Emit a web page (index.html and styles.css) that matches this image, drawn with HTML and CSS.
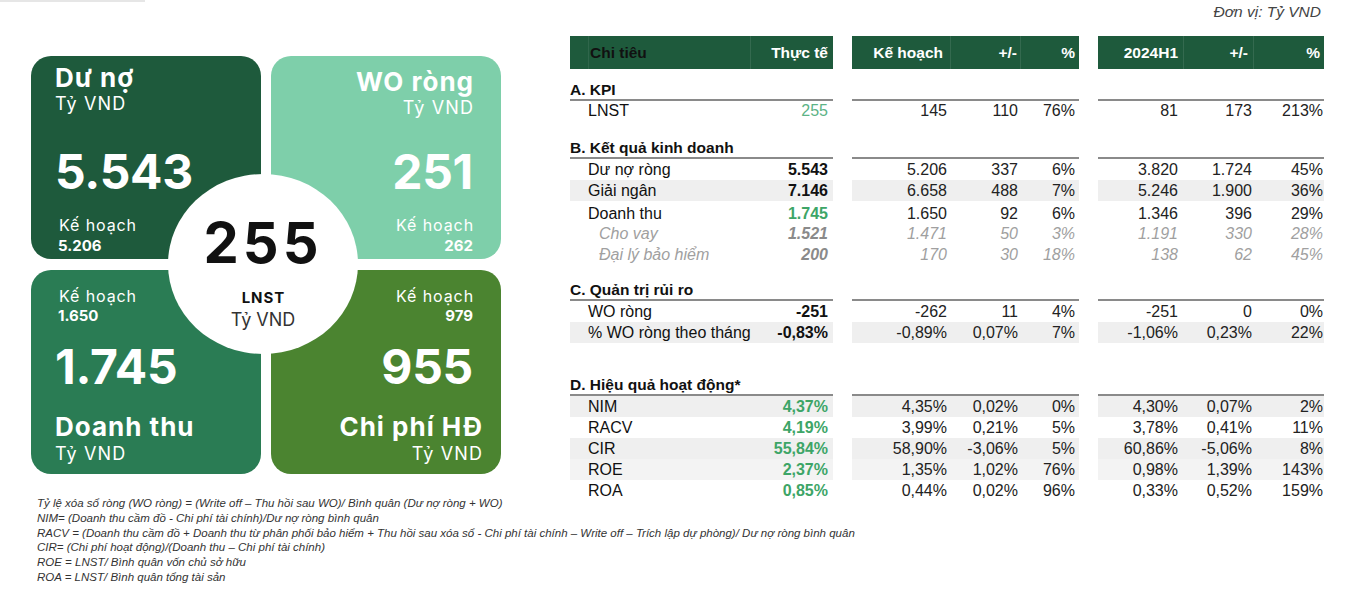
FILE: index.html
```html
<!DOCTYPE html>
<html lang="vi">
<head>
<meta charset="utf-8">
<title>Kết quả kinh doanh</title>
<link rel="stylesheet" href="styles.css">
</head>
<body>
<div class="page">
  <div class="topline"></div>
  <div class="top">
    <section class="kpis">
      <div class="card c-debt">
        <div class="title">Dư nợ</div>
        <div class="sub">Tỷ VND</div>
        <div class="big">5.543</div>
        <div class="plan-label">Kế hoạch</div>
        <div class="plan-val">5.206</div>
      </div>
      <div class="card c-wo right">
        <div class="title">WO ròng</div>
        <div class="sub">Tỷ VND</div>
        <div class="big">251</div>
        <div class="plan-label">Kế hoạch</div>
        <div class="plan-val">262</div>
      </div>
      <div class="card c-rev bottom">
        <div class="plan-label">Kế hoạch</div>
        <div class="plan-val">1.650</div>
        <div class="big">1.745</div>
        <div class="title">Doanh thu</div>
        <div class="sub">Tỷ VND</div>
      </div>
      <div class="card c-cost right bottom">
        <div class="plan-label">Kế hoạch</div>
        <div class="plan-val">979</div>
        <div class="big">955</div>
        <div class="title wide">Chi phí HĐ</div>
        <div class="sub wide">Tỷ VND</div>
      </div>
      <div class="circle">
        <div class="c-num">255</div>
        <div class="c-label">LNST</div>
        <div class="c-unit">Tỷ VND</div>
      </div>
    </section>

    <section class="report">
      <div class="unit">Đơn vị: Tỷ VND</div>
      <div class="tbl">
        <div class="row hdr">
          <div class="g g1"><div class="lbl">Chi tiêu</div><div>Thực tế</div></div>
          <div class="g g2"><div>Kế hoạch</div><div>+/-</div><div>%</div></div>
          <div class="g g3"><div>2024H1</div><div>+/-</div><div>%</div></div>
        </div>

        <div class="row sec sec-a">
          <div class="g g1"><div class="sec-title">A. KPI</div></div>
          <div class="g g2"></div>
          <div class="g g3"></div>
        </div>
        <div class="row r-lnst">
          <div class="g g1"><div class="lbl">LNST</div><div class="green light">255</div></div>
          <div class="g g2"><div>145</div><div>110</div><div>76%</div></div>
          <div class="g g3"><div>81</div><div>173</div><div>213%</div></div>
        </div>

        <div class="row sec sec-b">
          <div class="g g1"><div class="sec-title">B. Kết quả kinh doanh</div></div>
          <div class="g g2"></div>
          <div class="g g3"></div>
        </div>
        <div class="row r21">
          <div class="g g1"><div class="lbl">Dư nợ ròng</div><div class="b">5.543</div></div>
          <div class="g g2"><div>5.206</div><div>337</div><div>6%</div></div>
          <div class="g g3"><div>3.820</div><div>1.724</div><div>45%</div></div>
        </div>
        <div class="row r21 alt">
          <div class="g g1"><div class="lbl">Giải ngân</div><div class="b">7.146</div></div>
          <div class="g g2"><div>6.658</div><div>488</div><div>7%</div></div>
          <div class="g g3"><div>5.246</div><div>1.900</div><div>36%</div></div>
        </div>
        <div class="row r20 r-rev">
          <div class="g g1"><div class="lbl">Doanh thu</div><div class="green b">1.745</div></div>
          <div class="g g2"><div>1.650</div><div>92</div><div>6%</div></div>
          <div class="g g3"><div>1.346</div><div>396</div><div>29%</div></div>
        </div>
        <div class="row r20 sub-row">
          <div class="g g1"><div class="lbl">Cho vay</div><div class="b">1.521</div></div>
          <div class="g g2"><div>1.471</div><div>50</div><div>3%</div></div>
          <div class="g g3"><div>1.191</div><div>330</div><div>28%</div></div>
        </div>
        <div class="row r21 sub-row">
          <div class="g g1"><div class="lbl">Đại lý bảo hiểm</div><div class="b">200</div></div>
          <div class="g g2"><div>170</div><div>30</div><div>18%</div></div>
          <div class="g g3"><div>138</div><div>62</div><div>45%</div></div>
        </div>

        <div class="row sec sec-c">
          <div class="g g1"><div class="sec-title">C. Quản trị rủi ro</div></div>
          <div class="g g2"></div>
          <div class="g g3"></div>
        </div>
        <div class="row r21">
          <div class="g g1"><div class="lbl">WO ròng</div><div class="b">-251</div></div>
          <div class="g g2"><div>-262</div><div>11</div><div>4%</div></div>
          <div class="g g3"><div>-251</div><div>0</div><div>0%</div></div>
        </div>
        <div class="row r21 alt">
          <div class="g g1"><div class="lbl">% WO ròng theo tháng</div><div class="b">-0,83%</div></div>
          <div class="g g2"><div>-0,89%</div><div>0,07%</div><div>7%</div></div>
          <div class="g g3"><div>-1,06%</div><div>0,23%</div><div>22%</div></div>
        </div>

        <div class="row sec sec-d">
          <div class="g g1"><div class="sec-title">D. Hiệu quả hoạt động*</div></div>
          <div class="g g2"></div>
          <div class="g g3"></div>
        </div>
        <div class="row r21 alt">
          <div class="g g1"><div class="lbl">NIM</div><div class="green b">4,37%</div></div>
          <div class="g g2"><div>4,35%</div><div>0,02%</div><div>0%</div></div>
          <div class="g g3"><div>4,30%</div><div>0,07%</div><div>2%</div></div>
        </div>
        <div class="row r21">
          <div class="g g1"><div class="lbl">RACV</div><div class="green b">4,19%</div></div>
          <div class="g g2"><div>3,99%</div><div>0,21%</div><div>5%</div></div>
          <div class="g g3"><div>3,78%</div><div>0,41%</div><div>11%</div></div>
        </div>
        <div class="row r21 alt">
          <div class="g g1"><div class="lbl">CIR</div><div class="green b">55,84%</div></div>
          <div class="g g2"><div>58,90%</div><div>-3,06%</div><div>5%</div></div>
          <div class="g g3"><div>60,86%</div><div>-5,06%</div><div>8%</div></div>
        </div>
        <div class="row r21 alt2">
          <div class="g g1"><div class="lbl">ROE</div><div class="green b">2,37%</div></div>
          <div class="g g2"><div>1,35%</div><div>1,02%</div><div>76%</div></div>
          <div class="g g3"><div>0,98%</div><div>1,39%</div><div>143%</div></div>
        </div>
        <div class="row r21">
          <div class="g g1"><div class="lbl">ROA</div><div class="green b">0,85%</div></div>
          <div class="g g2"><div>0,44%</div><div>0,02%</div><div>96%</div></div>
          <div class="g g3"><div>0,33%</div><div>0,52%</div><div>159%</div></div>
        </div>
      </div>
    </section>
  </div>

  <div class="notes">
    <p>Tỷ lệ xóa sổ ròng (WO ròng) = (Write off – Thu hồi sau WO)/ Bình quân (Dư nợ ròng + WO)</p>
    <p>NIM= (Doanh thu cầm đồ - Chi phí tài chính)/Dư nợ ròng bình quân</p>
    <p>RACV = (Doanh thu cầm đồ + Doanh thu từ phân phối bảo hiểm + Thu hồi sau xóa sổ - Chi phí tài chính – Write off – Trích lập dự phòng)/ Dư nợ ròng bình quân</p>
    <p>CIR= (Chi phí hoạt động)/(Doanh thu – Chi phí tài chính)</p>
    <p>ROE = LNST/ Bình quân vốn chủ sở hữu</p>
    <p>ROA = LNST/ Bình quân tổng tài sản</p>
  </div>
</div>
</body>
</html>
```

FILE: styles.css
```css
* { box-sizing: border-box; }
html, body { margin: 0; padding: 0; background: #ffffff; }
body { font-family: "Liberation Sans", Arial, sans-serif; color: #111; }

.page { width: 1349px; height: 611px; overflow: hidden; }

.topline { width: 145px; height: 2px; background: #e6e6e6; margin-bottom: -2px; }

.top { display: flex; align-items: flex-start; }

/* ---------- KPI cards ---------- */
.kpis {
  position: relative;
  margin: 56px 0 0 31px;
  width: 470px;
  display: grid;
  grid-template-columns: 230px 230px;
  grid-template-rows: 203px 204px;
  column-gap: 10px;
  row-gap: 11px;
  font-family: Inter, "Open Sans", sans-serif;
  color: #ffffff;
}
.card {
  border-radius: 20px;
  padding: 7px 28px 0 24px;
  display: flex;
  flex-direction: column;
}
.c-debt { background: #1e5a3c; }
.c-wo { background: #7ecfaa; }
.c-rev { background: #2a7c54; }
.c-cost { background: #4b8430; }

.card.right { text-align: right; }
.card.bottom { padding-top: 16px; }
.c-cost { padding-top: 14px; }

.title { font-size: 26px; line-height: 29px; font-weight: 700; letter-spacing: 1px; }
.sub { font-size: 18px; line-height: 24px; font-weight: 400; letter-spacing: 1.1px; }
.big { font-size: 48px; line-height: 50px; font-weight: 700; margin-top: 31px; letter-spacing: -0.3px; }
.plan-label { font-size: 16px; line-height: 20px; font-weight: 400; margin-top: 18px; padding-left: 4px; letter-spacing: 0.9px; }
.plan-val { font-size: 15px; line-height: 18px; font-weight: 700; margin-top: 2px; padding-left: 3px; }
.card.right .plan-label, .card.right .plan-val { padding-left: 0; }
.card.right .title, .card.right .sub, .card.right .plan-label { margin-right: -1px; }

.c-wo .title { margin-top: 4px; }
.c-wo .big { margin-top: 27px; }

.card.bottom .plan-label { margin-top: 0; }
.card.bottom .plan-val { margin-top: 1px; }
.card.bottom .big { margin-top: 17px; }
.card.bottom .title { margin-top: 20px; }
.card.bottom .sub { margin-top: 1px; }
.c-cost .big { margin-top: 19px; }
.c-cost .title { margin-top: 23px; }
.card.right .wide { margin-right: -10px; }

.circle {
  position: absolute;
  left: 137px;
  top: 118px;
  width: 190px;
  height: 180px;
  border-radius: 50%;
  background: #ffffff;
  text-align: center;
  padding-top: 41px;
  color: #111;
}
.c-num { font-size: 56px; line-height: 56px; font-weight: 700; letter-spacing: 4px; padding-left: 0; }
.c-label { font-size: 15px; line-height: 18px; font-weight: 700; margin-top: 18px; letter-spacing: 1px; padding-left: 1px; }
.c-unit { font-size: 18px; line-height: 22px; font-weight: 400; margin-top: 2px; color: #333; }

/* ---------- Report table ---------- */
.report { margin-left: 69px; width: 754px; }
.unit {
  text-align: right;
  font-style: italic;
  font-size: 15.5px;
  line-height: 20px;
  color: #444;
  margin-top: 2px;
  padding-right: 3px;
  height: 34px;
}

.row {
  display: grid;
  grid-template-columns: 263px 227px 226px;
  column-gap: 19px;
  font-size: 16px;
  color: #222;
}
.g { display: grid; height: 100%; }
.g1 { grid-template-columns: 180px 83px; }
.g2 { grid-template-columns: 98px 70px 59px; }
.g3 { grid-template-columns: 85px 70px 71px; }
.g > div { display: flex; align-items: center; justify-content: flex-end; white-space: nowrap; }
.g > div.lbl, .g > div.sec-title { justify-content: flex-start; }

.g1 > div:nth-child(2) { padding-right: 5px; }
.g2 > div:nth-child(1) { padding-right: 3px; }
.g2 > div:nth-child(2) { padding-right: 2px; }
.g2 > div:nth-child(3) { padding-right: 4px; }
.g3 > div:nth-child(1) { padding-right: 5px; }
.g3 > div:nth-child(2) { padding-right: 1px; }
.g3 > div:nth-child(3) { padding-right: 1px; }

.lbl { padding-left: 18px; color: #111; }

/* header */
.hdr { height: 33px; }
.hdr .g { background: #1e5a3c; color: #ffffff; font-weight: 700; font-size: 15.5px; }
.hdr .g > div + div { border-left: 1px solid rgba(255,255,255,0.10); }
.hdr .g1 > div.lbl { border-left: 1px solid rgba(255,255,255,0.08); margin-left: 18px; padding-left: 1px; }
.hdr .g2 > div:nth-child(1) { padding-right: 7px; }
.hdr .g2 > div:nth-child(2) { padding-right: 3px; }
.hdr .g3 > div:nth-child(2) { padding-right: 5px; }
.hdr .g3 > div:nth-child(3) { padding-right: 4px; }

/* sections */
.sec { height: 20px; }
.sec .g { border-bottom: 2px solid #8a8a8a; }
.sec .g1 { grid-template-columns: 263px; }
.sec-title { font-weight: 700; font-size: 15.5px; color: #111; }
.sec-a { margin-top: 12px; }
.sec-b { margin-top: 19px; }
.sec-c { margin-top: 16px; }
.sec-d { margin-top: 33px; }

.r-lnst { height: 19px; }
.r21 { height: 21px; }
.r20 { height: 20px; }
.r-rev { margin-top: 3px; }

.alt .g { background: #efefef; }
.alt2 .g { background: #f3f3f3; }

.b { font-weight: 700; color: #111; }
.green { color: #3da567; }
.green.light { color: #5cb386; font-weight: 400; }

.sub-row .g > div { font-style: italic; color: #a0a0a0; }
.sub-row .g > div.lbl { padding-left: 29px; color: #a0a0a0; }
.sub-row .g > div.b { color: #8a8a8a; }

/* ---------- notes ---------- */
.notes {
  margin: -5px 0 0 37px;
  font-size: 11.5px;
  line-height: 14.8px;
  font-style: italic;
  color: #333;
}
.notes p { margin: 0; white-space: nowrap; }
```
